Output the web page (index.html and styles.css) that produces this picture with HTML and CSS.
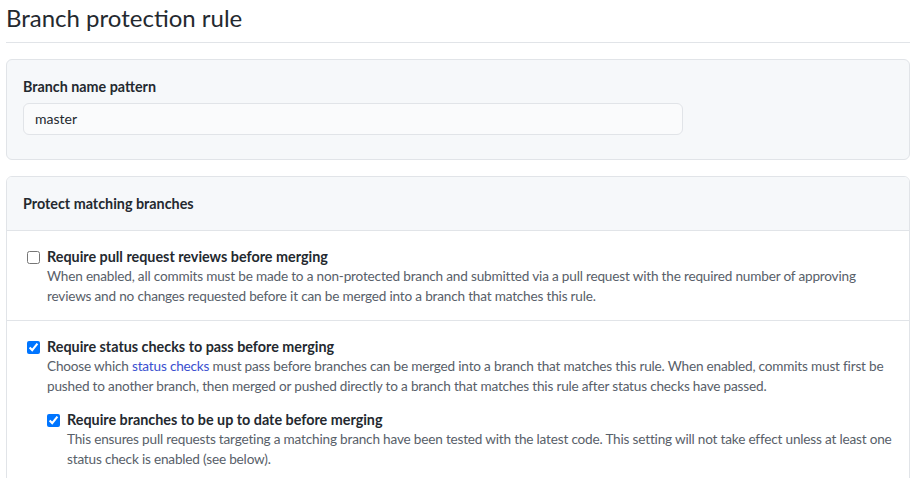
FILE: index.html
```html
<!DOCTYPE html>
<html lang="en">
<head>
<meta charset="utf-8">
<title>Branch protection rule</title>
<link rel="stylesheet" href="styles.css">
</head>
<body>
<div class="page">
  <h1 class="title">Branch protection rule</h1>

  <div class="box box-pattern">
    <label class="field-label" for="pattern">Branch name pattern</label>
    <div class="input" id="pattern">master</div>
  </div>

  <div class="box box-protect">
    <div class="box-header">Protect matching branches</div>

    <div class="row">
      <div class="check">
        <input type="checkbox" class="cb">
        <div class="check-body">
          <div class="check-label">Require pull request reviews before merging</div>
          <div class="check-desc">When enabled, all commits must be made to a non-protected branch and submitted via a pull request with the required number of approving<br>reviews and no changes requested before it can be merged into a branch that matches this rule.</div>
        </div>
      </div>
    </div>

    <div class="row">
      <div class="check">
        <input type="checkbox" class="cb" checked>
        <div class="check-body">
          <div class="check-label">Require status checks to pass before merging</div>
          <div class="check-desc">Choose which <a class="link" href="#">status checks</a> must pass before branches can be merged into a branch that matches this rule. When enabled, commits must first be<br>pushed to another branch, then merged or pushed directly to a branch that matches this rule after status checks have passed.</div>

          <div class="check nested">
            <input type="checkbox" class="cb" checked>
            <div class="check-body">
              <div class="check-label">Require branches to be up to date before merging</div>
              <div class="check-desc">This ensures pull requests targeting a matching branch have been tested with the latest code. This setting will not take effect unless at least one<br>status check is enabled (see below).</div>
            </div>
          </div>
        </div>
      </div>
    </div>
  </div>
</div>
</body>
</html>
```

FILE: styles.css
```css
html, body {
  margin: 0;
  padding: 0;
  background: #ffffff;
}

body {
  font-family: Lato, "Liberation Sans", Arial, sans-serif;
  font-size: 14px;
  color: #24292f;
}

.page {
  padding: 0 5px 0 6px;
}

.title {
  margin: 0;
  font-size: 24px;
  font-weight: 400;
  line-height: 36px;
  padding-bottom: 6px;
  border-bottom: 1px solid #e1e4e8;
  color: #24292f;
}

.box {
  border: 1px solid #e1e4e8;
  border-radius: 6px;
  background: #f6f8fa;
}

.box-pattern {
  margin-top: 16px;
  padding: 17px 16px 24px 16px;
  height: 58px;
}

.field-label {
  display: block;
  font-weight: 700;
  font-size: 14.3px;
  line-height: 20px;
  margin-bottom: 6px;
}

.input {
  width: 636px;
  height: 30px;
  line-height: 30px;
  padding: 0 11px;
  border: 1px solid #e1e4e8;
  border-radius: 6px;
  background: #fafbfc;
  color: #24292f;
}

.box-protect {
  margin-top: 16px;
  background: #ffffff;
  overflow: hidden;
}

.box-header {
  background: #f6f8fa;
  height: 53px;
  line-height: 54px;
  padding: 0 16px;
  font-weight: 700;
  font-size: 14.35px;
  border-bottom: 1px solid #e1e4e8;
}

.row {
  padding: 16px 16px 14px 20px;
  border-bottom: 1px solid #e1e4e8;
}

.check {
  display: flex;
  align-items: flex-start;
}

.cb {
  width: 13px;
  height: 13px;
  margin: 4px 7px 0 0;
  flex: none;
}

.check-label {
  font-weight: 700;
  font-size: 14.35px;
  line-height: 20px;
}

.check-desc {
  color: #586069;
  font-size: 13.6px;
  letter-spacing: -0.19px;
  line-height: 19.5px;
  white-space: nowrap;
}

.link {
  color: #3a4fd0;
  text-decoration: none;
}

.nested {
  margin-top: 14px;
}
```
